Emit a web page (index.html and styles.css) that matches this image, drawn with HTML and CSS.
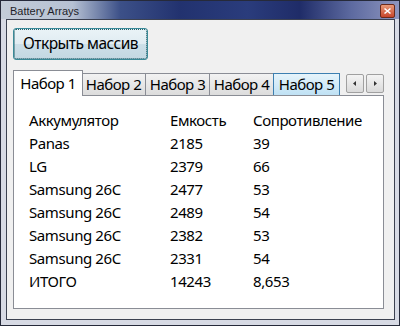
FILE: index.html
```html
<!DOCTYPE html>
<html lang="ru">
<head>
    <meta charset="UTF-8">
    <title>Battery Arrays</title>
    <link rel="stylesheet" href="styles.css">
</head>
<body>
<div class="window">
    <div class="titlebar">
        <span class="title">Battery Arrays</span>
        <span class="closeBtn">
            <svg width="9" height="8" viewBox="0 0 9 8"><path d="M1.5 1.5 L7.5 6.5 M7.5 1.5 L1.5 6.5" stroke="#fff" stroke-width="1.6"/></svg>
        </span>
    </div>
    <div class="client">
        <button class="openBtn">Открыть массив</button>

        <div class="tabControl">
            <div class="tabStrip">
                <div class="tab active">Набор 1</div>
                <div class="tab">Набор 2</div>
                <div class="tab">Набор 3</div>
                <div class="tab">Набор 4</div>
                <div class="tab hover">Набор 5</div>
                <div class="spin">
                    <span class="spinBtn"><svg width="4" height="5" viewBox="0 0 4 5"><path d="M3 0 L0 2.5 L3 5Z" fill="#333"/></svg></span>
                    <span class="spinBtn"><svg width="4" height="5" viewBox="0 0 4 5"><path d="M1 0 L4 2.5 L1 5Z" fill="#333"/></svg></span>
                </div>
            </div>
            <div class="tabPanel">
                <div class="grid">
                    <span>Аккумулятор</span><span>Емкость</span><span>Сопротивление</span>
                    <span>Panas</span><span>2185</span><span>39</span>
                    <span>LG</span><span>2379</span><span>66</span>
                    <span>Samsung 26C</span><span>2477</span><span>53</span>
                    <span>Samsung 26C</span><span>2489</span><span>54</span>
                    <span>Samsung 26C</span><span>2382</span><span>53</span>
                    <span>Samsung 26C</span><span>2331</span><span>54</span>
                    <span>ИТОГО</span><span>14243</span><span>8,653</span>
                </div>
            </div>
        </div>
    </div>
</div>
</body>
</html>
```

FILE: styles.css
```css
html, body {
    margin: 0;
    padding: 0;
}

body {
    width: 400px;
    height: 326px;
    overflow: hidden;
    font-family: "Noto Sans", "DejaVu Sans", sans-serif;
}

.window {
    box-sizing: border-box;
    width: 400px;
    height: 326px;
    display: flex;
    flex-direction: column;
    border: 1px solid #262a3a;
    background: #d7dae4;
    padding: 0 4px 5px 5px;
}

/* Title bar */
.titlebar {
    height: 18px;
    margin: 0 -4px 0 -5px;
    padding: 0 4px 0 9px;
    display: flex;
    align-items: center;
    justify-content: space-between;
    background: linear-gradient(90deg, #c3ccd8 0%, #b6c1d3 18%, #3c5088 30%, #22326f 45%, #2a3c7c 62%, #1f2c68 75%, #5d6aa0 88%, #8e96bf 100%);
}

.title {
    font-family: "Liberation Sans", sans-serif;
    font-size: 11px;
    color: #1e1e28;
    margin-top: 1px;
}

.closeBtn {
    width: 13px;
    height: 12px;
    display: flex;
    align-items: center;
    justify-content: center;
    border: 1px solid #6b2a1a;
    border-radius: 2px;
    background: linear-gradient(#e89a78, #c8452a);
    margin-top: 2px;
}

/* Client area */
.client {
    flex: 1;
    background: #f0f0f0;
    border: 1px solid #3c4150;
    padding: 8px 0 0 6px;
}

.openBtn {
    width: 135px;
    height: 32px;
    font-family: inherit;
    font-size: 15.5px;
    letter-spacing: -0.5px;
    color: #000;
    border: 1px solid #3a8a98;
    border-radius: 3px;
    outline: 1px dotted #23606b;
    outline-offset: -2px;
    background: linear-gradient(#eaf3f7 0%, #e0ecf2 50%, #ccdfe8 51%, #c3d8e2 100%);
    padding: 0 0 2px 0;
}

/* Tabs */
.tabControl {
    margin-top: 11px;
    width: 371px;
}

.tabStrip {
    position: relative;
    display: flex;
    align-items: flex-end;
    height: 24px;
    padding-left: 2px;
}

.tab {
    box-sizing: border-box;
    height: 22px;
    width: 65px;
    margin-left: -1px;
    font-size: 15px;
    letter-spacing: -0.5px;
    line-height: 20px;
    text-align: center;
    border: 1px solid #8a8d95;
    border-bottom: none;
    background: linear-gradient(#f2f2f2, #dcdcdc);
    color: #000;
}

.tab:first-child {
    margin-left: 0;
}

.tab.active {
    position: relative;
    z-index: 2;
    height: 26px;
    width: 70px;
    margin: 0 -1px -1px -2px;
    background: #fff;
    line-height: 24px;
}

.tab.hover {
    width: 67px;
    border-color: #3c7fb1;
    background: linear-gradient(#e6f4fb, #bfe1f4);
}

.spin {
    position: absolute;
    right: 0;
    top: 3px;
    display: flex;
    gap: 2px;
}

.spinBtn {
    box-sizing: border-box;
    width: 18px;
    height: 19px;
    display: flex;
    align-items: center;
    justify-content: center;
    border: 1px solid #a0a0a0;
    border-radius: 2px;
    background: linear-gradient(#f4f4f4, #dadada);
}

.tabPanel {
    box-sizing: border-box;
    height: 214px;
    background: #fff;
    border: 1px solid #8a8d95;
    padding: 13px 0 0 15px;
}

.grid {
    display: grid;
    grid-template-columns: 141px 83px auto;
    grid-auto-rows: 23px;
    font-size: 15px;
    letter-spacing: -0.4px;
    line-height: 23px;
    color: #000;
}
```
